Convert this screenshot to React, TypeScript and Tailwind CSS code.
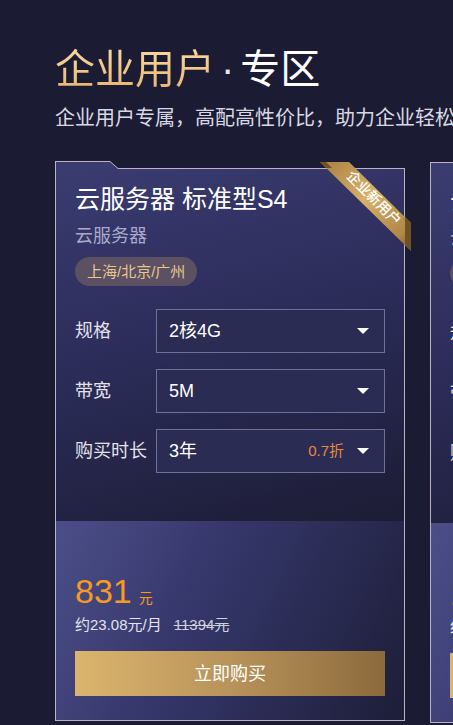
import React from "react";

function Arrow() {
  return (
    <svg width="12" height="6" viewBox="0 0 12 6" className="shrink-0">
      <path d="M0 0H12L6 6Z" fill="#ffffff" />
    </svg>
  );
}

function Select({ value, note }: { value: string; note?: string }) {
  return (
    <div className="flex h-[44px] w-[229px] shrink-0 items-center border border-[#6f7099] bg-[#2b2c54] pl-3 pr-[15px]">
      <span className="flex-1 text-[18px] leading-[24px] text-white">{value}</span>
      {note && <span className="mr-[13px] text-[15px] leading-[20px] text-[#e8893c]">{note}</span>}
      <Arrow />
    </div>
  );
}

function Row({ label, value, note }: { label: string; value: string; note?: string }) {
  return (
    <div className="flex items-center">
      <span className="w-[81px] shrink-0 text-[18px] leading-[24px] text-[#e2e2ec]">{label}</span>
      <Select value={value} note={note} />
    </div>
  );
}

type CardData = {
  title: string;
  sub: string;
  tag: string;
  spec: string;
  bw: string;
  dur: string;
  note?: string;
  price: string;
  month: string;
  orig: string;
};

function CardBody({ d }: { d: CardData }) {
  return (
    <>
      <div className="flex flex-col items-start bg-[linear-gradient(165deg,#3b3c71_0%,#2c2d5a_45%,#1c1c35_100%)] px-[19px] pt-[22px] pb-[48px]">
        <div className="text-[25px] leading-[32px] text-white">{d.title}</div>
        <div className="mt-[9px] text-[18px] leading-[24px] text-[#a9aacb]">{d.sub}</div>
        <div className="mt-[9px] flex h-[29px] items-center rounded-full bg-[#5b5163] px-[12px] text-[15px] leading-[20px] text-[#e9c68e]">
          {d.tag}
        </div>
        <div className="mt-[23px] flex flex-col gap-4 self-stretch">
          <Row label="规格" value={d.spec} />
          <Row label="带宽" value={d.bw} />
          <Row label="购买时长" value={d.dur} note={d.note} />
        </div>
      </div>
      <div className="flex flex-col bg-[linear-gradient(115deg,#4c4e88_0%,#35376b_40%,#1d1e38_100%)] px-[19px] pt-[50px] pb-[24px]">
        <div className="flex items-baseline">
          <span className="text-[34px] leading-[40px] text-[#f59a22]">{d.price}</span>
          <span className="ml-[7px] text-[14px] leading-[20px] text-[#f59a22]">元</span>
        </div>
        <div className="mt-1 flex text-[15px] leading-[20px]">
          <span className="text-[#e4e4ee]">{d.month}</span>
          <span className="ml-3 text-[#d2d2dc] line-through">{d.orig}</span>
        </div>
        <button className="mt-4 flex h-[45px] items-center justify-center bg-[linear-gradient(90deg,#dbb56d_0%,#b8935a_50%,#8c6a3c_100%)] text-[18px] leading-[24px] text-white">
          立即购买
        </button>
      </div>
    </>
  );
}

const card1: CardData = {
  title: "云服务器 标准型S4",
  sub: "云服务器",
  tag: "上海/北京/广州",
  spec: "2核4G",
  bw: "5M",
  dur: "3年",
  note: "0.7折",
  price: "831",
  month: "约23.08元/月",
  orig: "11394元",
};

const card2: CardData = {
  title: "云服务器 标准型SA2",
  sub: "云服务器",
  tag: "上海/北京/广州",
  spec: "4核8G",
  bw: "5M",
  dur: "3年",
  note: "0.6折",
  price: "1689",
  month: "约46.92元/月",
  orig: "22788元",
};

export default function App() {
  return (
    <div className="h-[725px] w-full overflow-hidden bg-[#1b1c34] font-['Liberation_Sans','Noto_Sans_CJK_SC',sans-serif]">
      <div className="flex flex-col px-[55px] pt-[45px]">
        <h1 className="flex whitespace-nowrap text-[40px] leading-[48px] font-normal">
          <span className="bg-gradient-to-b from-[#f9dba3] to-[#e7b36b] bg-clip-text text-transparent">企业用户</span>
          <span className="mx-[6px] text-[#e6e6ee]">·</span>
          <span className="text-white">专区</span>
        </h1>
        <p className="mt-[11px] whitespace-nowrap text-[20px] leading-[28px] text-[#d9d9e3]">
          企业用户专属，高配高性价比，助力企业轻松上云
        </p>

        <div className="mt-[29px] flex items-start gap-[25px]">
          <div className="relative w-[350px] shrink-0">
            <div className="flex flex-col border-x border-b border-[#bdb2bf] [clip-path:polygon(0_0,55px_0,63px_7px,100%_7px,100%_100%,0_100%)]">
              <CardBody d={card1} />
            </div>
            <svg className="pointer-events-none absolute left-0 top-0 overflow-visible" width="360" height="100" viewBox="0 0 360 100">
              <polyline points="0.5,0.5 55,0.5 63,7.5 349.5,7.5" fill="none" stroke="#bdb2bf" strokeWidth="1" />
              <defs>
                <linearGradient id="rib" x1="0" y1="0" x2="1" y2="1">
                  <stop offset="0" stopColor="#a9803f" />
                  <stop offset="0.45" stopColor="#d7b06a" />
                  <stop offset="0.85" stopColor="#b18846" />
                  <stop offset="1" stopColor="#7d5c2c" />
                </linearGradient>
              </defs>
              <polygon points="265,1 294,1 356,62 356,90" fill="url(#rib)" />
              <polygon points="265,1 271,1 277,7 271,7" fill="#6e5226" />
              <polygon points="350,56 356,62 356,90 350,84" fill="#6e5226" />
            </svg>
            <div className="pointer-events-none absolute left-[319px] top-[37px] -translate-x-1/2 -translate-y-1/2 rotate-45 whitespace-nowrap text-[14px] leading-[16px] font-medium text-white">
              企业新用户
            </div>
          </div>

          <div className="mt-px w-[350px] shrink-0">
            <div className="flex flex-col border border-[#bdb2bf]">
              <CardBody d={card2} />
            </div>
          </div>
        </div>
      </div>
    </div>
  );
}
